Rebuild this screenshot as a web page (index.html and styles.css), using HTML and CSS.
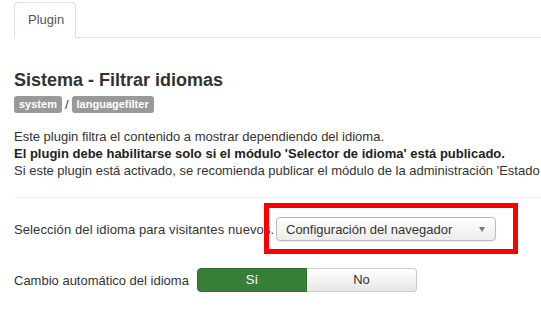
FILE: index.html
```html
<!DOCTYPE html>
<html lang="es">
<head>
<meta charset="utf-8">
<link rel="stylesheet" href="styles.css">
</head>
<body>
<div class="page">
  <ul class="tabs">
    <li class="tab active">Plugin</li>
  </ul>
  <div class="content">
    <h3 class="title">Sistema - Filtrar idiomas</h3>
    <div class="crumbs"><span class="badge">system</span><span class="sep">/</span><span class="badge">languagefilter</span></div>
    <div class="desc">
      <p>Este plugin filtra el contenido a mostrar dependiendo del idioma.</p>
      <p class="strong">El plugin debe habilitarse solo si el módulo 'Selector de idioma' está publicado.</p>
      <p>Si este plugin está activado, se recomienda publicar el módulo de la administración 'Estado multiidioma'.</p>
    </div>
    <hr class="rule">
    <div class="row row-select">
      <label class="label">Selección del idioma para visitantes nuevos.</label>
      <div class="select">
        <span>Configuración del navegador</span>
        <span class="caret"></span>
      </div>
      <div class="highlight"></div>
    </div>
    <div class="row row-toggle">
      <label class="label">Cambio automático del idioma</label>
      <div class="toggle">
        <span class="btn on">Sí</span>
        <span class="btn">No</span>
      </div>
    </div>
  </div>
</div>
</body>
</html>
```
FILE: styles.css
```css
html, body { margin: 0; padding: 0; background: #fff; }
body {
  font-family: "Liberation Sans", Arial, Helvetica, sans-serif;
  font-size: 13px;
  color: #333;
  width: 541px;
  height: 312px;
  overflow: hidden;
}
.page { padding-top: 2px; }
.tabs {
  list-style: none;
  margin: 0 0 0 14px;
  padding: 0;
  display: flex;
  border-bottom: 1px solid #ddd;
}
.tab {
  border: 1px solid #ddd;
  border-bottom-color: transparent;
  border-radius: 4px 4px 0 0;
  margin-bottom: -1px;
  padding: 0 13px;
  height: 34px;
  line-height: 34px;
  width: 34px;
  color: #555;
  background: #fff;
}
.content { padding: 0 0 0 14px; }
.title {
  margin: 30px 0 0;
  font-size: 18px;
  line-height: 24px;
  font-weight: bold;
  color: #333;
}
.crumbs {
  display: flex;
  align-items: center;
  margin-top: 4px;
  height: 17px;
}
.badge {
  background: #999;
  color: #fff;
  font-weight: bold;
  font-size: 11px;
  line-height: 17px;
  padding: 0 5px;
  border-radius: 3px;
}
.sep { margin: 0 3px; color: #333; }
.desc { margin-top: 15px; white-space: nowrap; overflow: hidden; }
.desc p { margin: 0; line-height: 17px; }
.desc .strong { font-weight: bold; color: #222; }
.rule {
  border: 0;
  border-top: 1px solid #eee;
  margin: 18px 0 0;
}
.row {
  display: flex;
  align-items: center;
  position: relative;
}
.row-select { margin-top: 19px; height: 24px; }
.label { color: #333; }
.row-select .label { width: 262px; letter-spacing: 0.1px; }
.select {
  box-sizing: border-box;
  width: 220px;
  height: 24px;
  border: 1px solid #bbb;
  border-radius: 4px;
  background: linear-gradient(#fff, #ececec);
  display: flex;
  align-items: center;
  justify-content: space-between;
  padding: 0 9px;
  font-size: 13px;
  color: #333;
  box-shadow: 0 1px 1px rgba(0,0,0,0.08);
}
.caret {
  width: 0; height: 0;
  border-left: 3.5px solid transparent;
  border-right: 3.5px solid transparent;
  border-top: 5px solid #777;
  margin-right: 1px;
}
.highlight {
  position: absolute;
  left: 250px;
  top: -14px;
  width: 244px;
  height: 41px;
  border: 5px solid #f00;
}
.row-toggle { margin-top: 27px; height: 24px; }
.row-toggle .label { width: 183px; }
.toggle { display: flex; }
.btn {
  box-sizing: border-box;
  width: 110px;
  height: 24px;
  line-height: 22px;
  text-align: center;
  border: 1px solid #ccc;
  background: linear-gradient(#fff, #e6e6e6);
  color: #333;
}
.btn.on {
  background: #377e37;
  border-color: #2e6e2e;
  color: #fff;
  border-radius: 4px 0 0 4px;
}
.btn:last-child { border-left: 0; border-radius: 0 4px 4px 0; }
```
